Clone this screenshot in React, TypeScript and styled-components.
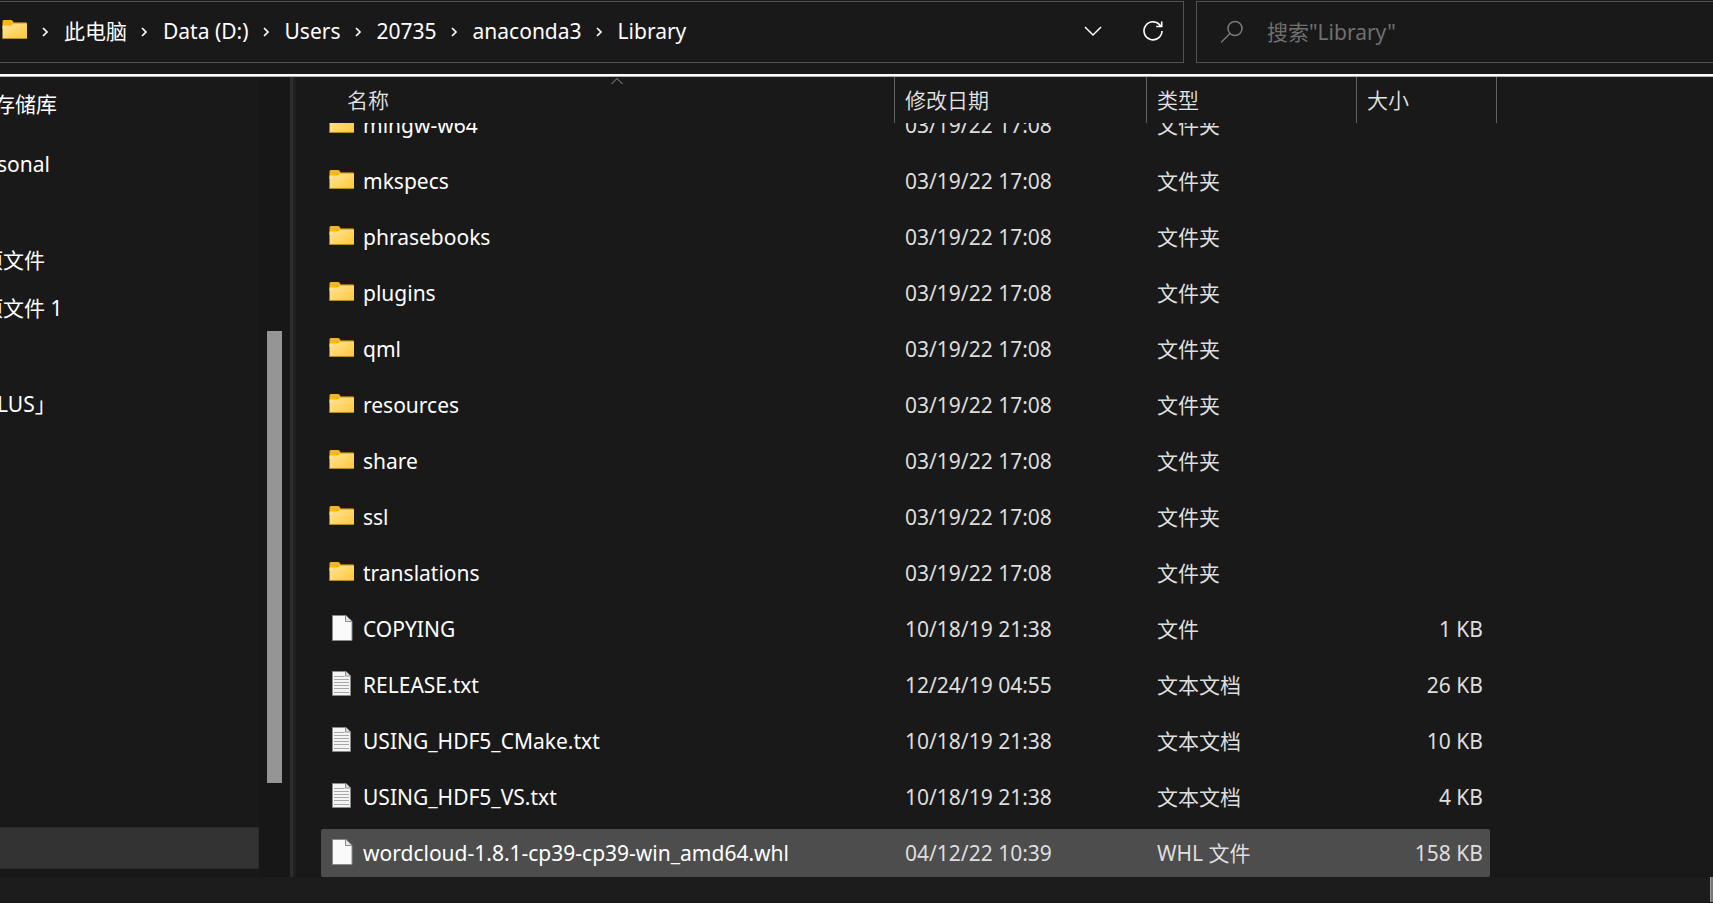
import React from 'react';
import styled, { createGlobalStyle } from 'styled-components';

const Global = createGlobalStyle`
  * { box-sizing: border-box; }
  body { margin: 0; background: #191919; }
  button, input { font: inherit; color: inherit; background: none; border: 0; padding: 0; margin: 0; }
`;

const Shell = styled.div`
  display: flex;
  flex-direction: column;
  height: 100vh;
  overflow: hidden;
  background: #191919;
  color: #fff;
  font: 21px/28px "Noto Sans", "Noto Sans CJK SC", sans-serif;
`;

const TopBar = styled.header`
  display: grid;
  grid-template-columns: minmax(0, 1184fr) minmax(0, 517fr);
  column-gap: 12px;
  padding: 1px 0 11px;
`;

const Address = styled.nav`
  display: flex;
  align-items: center;
  height: 62px;
  padding: 0 16px 2px 2px;
  border: 1px solid #535353;
  border-left: 0;
`;

const Crumbs = styled.ol`
  display: flex;
  flex: 1;
  margin: 0;
  padding: 0;
  list-style: none;
  white-space: nowrap;
`;

const Crumb = styled.li`
  display: flex;
  align-items: center;
`;

const CrumbLink = styled.a`
  color: #fff;
  text-decoration: none;
`;

const Arrow = styled.svg`
  width: 8px;
  height: 12px;
  margin: 2px 15px 0 13px;
`;

const IconButton = styled.button`
  display: flex;
  align-items: center;
  justify-content: center;
  width: 28px;
  height: 28px;
  margin-left: 32px;
`;

const Search = styled.label`
  display: flex;
  align-items: center;
  gap: 23px;
  height: 62px;
  padding: 0 0 0 23px;
  border: 1px solid #535353;
  border-right: 0;
  color: #7a7a7a;
`;

const SearchInput = styled.input`
  flex: 1;
  min-width: 0;
  height: 32px;
  outline: 0;
  &::placeholder { color: #707070; opacity: 1; }
`;

const Main = styled.div`
  display: flex;
  flex: 1;
  min-height: 0;
  border-top: 2px solid #fff;
  box-shadow: inset 0 1px 0 #b4b4b4;
`;

const Sidebar = styled.aside`
  display: flex;
  flex: none;
  width: 290px;
  padding-top: 1px;
`;

const Tree = styled.ul`
  display: flex;
  flex: 1;
  flex-direction: column;
  margin: 0;
  padding: 3px 0 8px;
  overflow: hidden;
  list-style: none;
  white-space: nowrap;
`;

const TreeItem = styled.li<{ $space?: number; $shift?: number }>`
  flex: none;
  height: 48px;
  margin-top: ${(p) => p.$space ?? 0}px;
  line-height: 48px;
  text-indent: ${(p) => -(p.$shift ?? 0)}px;
`;

const TreeSelected = styled.li`
  height: 42px;
  margin-top: auto;
  background: #333;
  border: 1px solid #2b2b2b;
  border-left: 0;
`;

const Track = styled.div`
  display: flex;
  flex-direction: column;
  width: 31px;
  padding-left: 8px;
  background: #171717;
`;

const Thumb = styled.div`
  width: 15px;
  height: 56.5%;
  margin-top: 254px;
  background: #959595;
`;

const Splitter = styled.div`
  flex: none;
  width: 6px;
  margin-top: 1px;
  background: #202020;
  border-left: 3px solid #2e2e2e;
`;

const Table = styled.table`
  display: flex;
  flex: 1;
  flex-direction: column;
  min-width: 0;
  padding-left: 25px;
`;

const Head = styled.thead`
  display: block;
  padding-top: 1px;
`;

const Body = styled.tbody`
  display: flex;
  flex: 1;
  flex-direction: column;
  justify-content: flex-end;
  gap: 8px;
  min-height: 0;
  overflow: hidden;
`;

const HeadRow = styled.tr`
  display: grid;
  grid-template-columns: 574px 252px 210px 140px;
  height: 46px;
`;

const HeadCell = styled.th<{ $first?: boolean }>`
  position: relative;
  padding: 9px 0 0 ${(p) => (p.$first ? 26 : 10)}px;
  border-right: 1px solid #636363;
  color: #e4e4e4;
  font-weight: 350;
  text-align: left;
`;

const SortMark = styled.svg`
  position: absolute;
  top: 0;
  left: 50%;
  width: 14px;
  height: 8px;
  margin-left: 2px;
`;

const Row = styled.tr<{ $selected?: boolean }>`
  display: grid;
  flex: none;
  grid-template-columns: 574px 252px 210px 133px;
  align-items: center;
  width: 1169px;
  height: 48px;
  border-radius: 2px;
  background: ${(p) => (p.$selected ? '#4d4d4d' : 'transparent')};
`;

const Cell = styled.td<{ $right?: boolean }>`
  padding: 0 7px 0 10px;
  color: #dedede;
  text-align: ${(p) => (p.$right ? 'right' : 'left')};
  white-space: nowrap;
`;

const NameCell = styled.td`
  display: flex;
  align-items: center;
  gap: 8px;
  padding: 0 0 0 8px;
  white-space: nowrap;
`;

const IconBox = styled.span`
  display: flex;
  width: 26px;
  height: 32px;
`;

const Status = styled.footer`
  display: flex;
  flex: none;
  justify-content: flex-end;
  height: 26px;
  background: #1c1c1c;
  border-bottom: 1px solid #151515;
`;

const StatusGrip = styled.span`
  width: 3px;
  background: #777;
  border-left: 1px solid #999;
`;

const FolderIcon = () => (
  <svg width="26" height="32" viewBox="0 0 26 32" aria-hidden="true">
    <defs>
      <linearGradient id="folder" x1="0" y1="0" x2="1" y2="1">
        <stop offset="0" stopColor="#ffe39b" />
        <stop offset="1" stopColor="#fec932" />
      </linearGradient>
    </defs>
    <path d="M0.5 6.5q0-1.5 1.500-1.500h7q1.200 0 1.800 1.200l.8 1.300H24q1 0 1 1V14H.5z" fill="#fbb41a" />
    <path d="M.5 10.500H8.500q1 0 1.600-.6l.8-.9H24q1 0 1 1V23q0 1-1 1H1.500q-1 0-1-1z" fill="url(#folder)" />
    <path d="M.5 23.500h24.500" stroke="#b98a2a" strokeWidth="1" />
  </svg>
);

const FileIcon = () => (
  <svg width="26" height="32" viewBox="0 0 26 32" aria-hidden="true">
    <path d="M3.500 2.500h13.500l6 6v19H3.500z" fill="#fafafa" stroke="#8a8a8a" />
    <path d="M16.500 2.500v6h6" fill="#e6e6e6" stroke="#8a8a8a" />
  </svg>
);

const TextIcon = () => (
  <svg width="26" height="32" viewBox="0 0 26 32" aria-hidden="true">
    <path d="M3.500 2.500h13.500l4.500 4.500v19.500H3.500z" fill="#f4f4f4" stroke="#8a8a8a" />
    <path d="M16.500 2.500v4.500h5" fill="#ddd" stroke="#8a8a8a" />
    <path d="M5 7.500h10.500M5 10.500h15M5 13.500h15M5 16.500h15M5 19.500h15M5 23.500h15" stroke="#a8a8a8" />
  </svg>
);

const icons = { folder: FolderIcon, file: FileIcon, text: TextIcon };

type Entry = { name: string; date: string; type: string; size?: string; icon: keyof typeof icons };

const folders = ['mingw-w64', 'mkspecs', 'phrasebooks', 'plugins', 'qml', 'resources', 'share', 'ssl', 'translations'];

const entries: Entry[] = [
  ...folders.map((name): Entry => ({ name, date: '03/19/22 17:08', type: '文件夹', icon: 'folder' })),
  { name: 'COPYING', date: '10/18/19 21:38', type: '文件', size: '1 KB', icon: 'file' },
  { name: 'RELEASE.txt', date: '12/24/19 04:55', type: '文本文档', size: '26 KB', icon: 'text' },
  { name: 'USING_HDF5_CMake.txt', date: '10/18/19 21:38', type: '文本文档', size: '10 KB', icon: 'text' },
  { name: 'USING_HDF5_VS.txt', date: '10/18/19 21:38', type: '文本文档', size: '4 KB', icon: 'text' },
  { name: 'wordcloud-1.8.1-cp39-cp39-win_amd64.whl', date: '04/12/22 10:39', type: 'WHL 文件', size: '158 KB', icon: 'file' },
];

const path = ['此电脑', 'Data (D:)', 'Users', '20735', 'anaconda3', 'Library'];

const tree = [
  { label: '存储库', shift: 6 },
  { label: 'sonal', space: 12, shift: 3 },
  { label: '项文件', space: 48, shift: 18 },
  { label: '项文件 1', shift: 18 },
  { label: 'LUS」', space: 48, shift: 3 },
];

export default function App() {
  return (
    <Shell lang="zh-CN">
      <Global />
      <TopBar>
        <Address aria-label="地址">
          <FolderIcon />
          <Crumbs>
            {path.map((part) => (
              <Crumb key={part}>
                <Arrow viewBox="0 0 8 12" aria-hidden="true">
                  <path d="M2 2l4 4-4 4" fill="none" stroke="#fff" strokeWidth="1.700" />
                </Arrow>
                <CrumbLink href="#">{part}</CrumbLink>
              </Crumb>
            ))}
          </Crumbs>
          <IconButton aria-label="展开">
            <svg width="18" height="11" viewBox="0 0 18 11">
              <path d="M1 1l8 8 8-8" fill="none" stroke="#fff" strokeWidth="1.500" />
            </svg>
          </IconButton>
          <IconButton aria-label="刷新">
            <svg width="22" height="22" viewBox="0 0 22 22">
              <path d="M18.600 6A9 9 0 1 0 20 11M19.700 1.500v5h-5.500" fill="none" stroke="#fff" strokeWidth="1.600" />
            </svg>
          </IconButton>
        </Address>
        <Search>
          <svg width="24" height="24" viewBox="0 0 24 24" aria-hidden="true">
            <circle cx="15" cy="8.500" r="7" fill="none" stroke="#7a7a7a" strokeWidth="1.500" />
            <path d="M10 13.500l-9 9" stroke="#7a7a7a" strokeWidth="1.500" />
          </svg>
          <SearchInput aria-label="搜索" placeholder={'搜索"Library"'} />
        </Search>
      </TopBar>
      <Main>
        <Sidebar>
          <Tree>
            {tree.map((item) => (
              <TreeItem key={item.label} $space={item.space} $shift={item.shift}>
                {item.label}
              </TreeItem>
            ))}
            <TreeSelected />
          </Tree>
          <Track>
            <Thumb />
          </Track>
        </Sidebar>
        <Splitter />
        <Table>
          <Head>
            <HeadRow>
              <HeadCell $first scope="col">
                名称
                <SortMark viewBox="0 0 14 8" aria-hidden="true">
                  <path d="M1.500 7L7 1.500 12.500 7" fill="none" stroke="#999" />
                </SortMark>
              </HeadCell>
              <HeadCell scope="col">修改日期</HeadCell>
              <HeadCell scope="col">类型</HeadCell>
              <HeadCell scope="col">大小</HeadCell>
            </HeadRow>
          </Head>
          <Body>
            {entries.map((entry, index) => {
              const Icon = icons[entry.icon];
              return (
                <Row key={entry.name} $selected={index === entries.length - 1}>
                  <NameCell>
                    <IconBox>
                      <Icon />
                    </IconBox>
                    {entry.name}
                  </NameCell>
                  <Cell>{entry.date}</Cell>
                  <Cell>{entry.type}</Cell>
                  <Cell $right>{entry.size}</Cell>
                </Row>
              );
            })}
          </Body>
        </Table>
      </Main>
      <Status>
        <StatusGrip />
      </Status>
    </Shell>
  );
}
